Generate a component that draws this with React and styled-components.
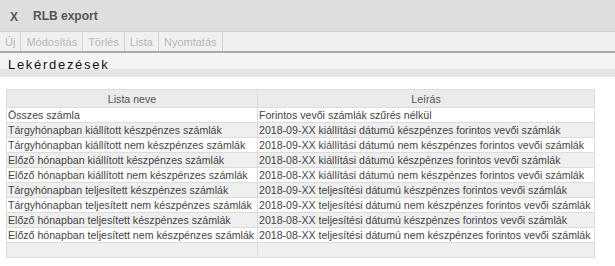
import React from "react";
import styled, { createGlobalStyle } from "styled-components";

const Global = createGlobalStyle`
  html, body { margin: 0; padding: 0; background: #ffffff; }
  body { font-family: "Liberation Sans", Arial, sans-serif; }
`;

const Page = styled.div`
  width: 615px;
  height: 266px;
  display: flex;
  flex-direction: column;
  background: #fff;
  overflow: hidden;
`;

const TitleBar = styled.div`
  height: 31px;
  background: #dedede;
  border-bottom: 1px solid #d2d2d2;
  display: flex;
  align-items: center;
  gap: 15px;
  padding-left: 10px;
  color: #555;
  font-weight: bold;
  font-size: 12px;
`;

const CloseX = styled.span`
  font-size: 12px;
  padding-top: 2px;
`;

const Toolbar = styled.div`
  height: 19px;
  background: #f0f0f0;
  border-bottom: 2px solid #aaaaaa;
  display: flex;
  align-items: stretch;
`;

const ToolButton = styled.span`
  display: flex;
  align-items: center;
  padding: 0 5px 0 5px;
  border-right: 1px solid #d4d4d4;
  color: #b8b8b8;
  font-size: 11px;
`;

const Section = styled.div`
  height: 24px;
  background: linear-gradient(#f4f4f4 0, #f4f4f4 15px, #e5e5e5 17px, #e5e5e5 100%);
  display: flex;
  align-items: flex-start;
  padding-left: 8px;
  padding-top: 4px;
  box-sizing: border-box;
  font-size: 13px;
  letter-spacing: 1.7px;
  color: #111;
`;

const TableWrap = styled.div`
  padding: 12px 0 0 6px;
`;

const Table = styled.table`
  border-collapse: collapse;
  width: 589px;
  table-layout: fixed;
  font-size: 10.6px;
  color: #444;
`;

const HeadCell = styled.th`
  font-weight: normal;
  background: #ebebeb;
  border: 1px solid #dcdcdc;
  height: 17px;
  padding: 0;
  text-align: center;
  color: #555;
`;

const Row = styled.tr`
  background: ${(p) => (p.$alt ? "#efefef" : "#ffffff")};
`;

const Cell = styled.td`
  border: 1px solid #dcdcdc;
  height: 14px;
  padding: 0 0 0 1px;
  white-space: nowrap;
  overflow: hidden;
  line-height: 14px;
`;

const rows = [
  ["Összes számla", "Forintos vevői számlák szűrés nélkül"],
  ["Tárgyhónapban kiállított készpénzes számlák", "2018-09-XX kiállítási dátumú készpénzes forintos vevői számlák"],
  ["Tárgyhónapban kiállított nem készpénzes számlák", "2018-09-XX kiállítási dátumú nem készpénzes forintos vevői számlák"],
  ["Előző hónapban kiállított készpénzes számlák", "2018-08-XX kiállítási dátumú készpénzes forintos vevői számlák"],
  ["Előző hónapban kiállított nem készpénzes számlák", "2018-08-XX kiállítási dátumú nem készpénzes forintos vevői számlák"],
  ["Tárgyhónapban teljesített készpénzes számlák", "2018-09-XX teljesítési dátumú készpénzes forintos vevői számlák"],
  ["Tárgyhónapban teljesített nem készpénzes számlák", "2018-09-XX teljesítési dátumú nem készpénzes forintos vevői számlák"],
  ["Előző hónapban teljesített készpénzes számlák", "2018-08-XX teljesítési dátumú készpénzes forintos vevői számlák"],
  ["Előző hónapban teljesített nem készpénzes számlák", "2018-08-XX teljesítési dátumú nem készpénzes forintos vevői számlák"],
  ["", ""],
];

export default function App() {
  return (
    <Page>
      <Global />
      <TitleBar>
        <CloseX>X</CloseX>
        <span>RLB export</span>
      </TitleBar>
      <Toolbar>
        {["Új", "Módosítás", "Törlés", "Lista", "Nyomtatás"].map((t) => (
          <ToolButton key={t}>{t}</ToolButton>
        ))}
      </Toolbar>
      <Section>Lekérdezések</Section>
      <TableWrap>
        <Table>
          <colgroup>
            <col style={{ width: 251 }} />
            <col />
          </colgroup>
          <thead>
            <tr>
              <HeadCell>Lista neve</HeadCell>
              <HeadCell>Leírás</HeadCell>
            </tr>
          </thead>
          <tbody>
            {rows.map((r, i) => (
              <Row key={i} $alt={i % 2 === 1}>
                <Cell>{r[0]}</Cell>
                <Cell>{r[1]}</Cell>
              </Row>
            ))}
          </tbody>
        </Table>
      </TableWrap>
    </Page>
  );
}
